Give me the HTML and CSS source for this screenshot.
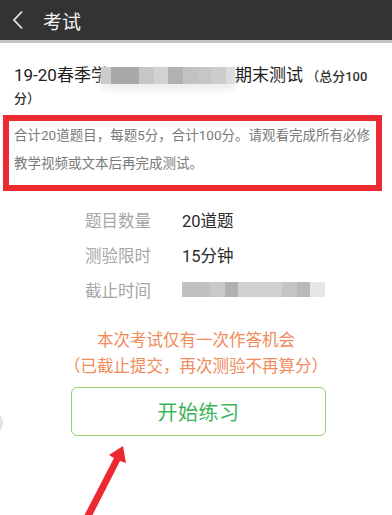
FILE: index.html
```html
<!DOCTYPE html>
<html lang="zh">
<head>
<meta charset="utf-8">
<link rel="stylesheet" href="styles.css">
</head>
<body>
<div class="page">
  <header class="topbar">
    <svg class="back" width="14" height="20" viewBox="0 0 14 20"><path d="M11 1.5 L3 10 L11 18.5" fill="none" stroke="#e6e6e6" stroke-width="1.8"/></svg>
    <span class="top-title">考试</span>
  </header>
  <div class="exam-title">19-20春季学<span class="blur-title"></span>期末测试<span class="total"> （总分100分）</span></div>
  <div class="notice">合计20道题目，每题5分，合计100分。请观看完成所有必修教学视频或文本后再完成测试。</div>
  <div class="info">
    <span class="label">题目数量</span><span class="value">20道题</span>
    <span class="label">测验限时</span><span class="value">15分钟</span>
    <span class="label">截止时间</span><span class="value"><span class="blur-date"></span></span>
  </div>
  <div class="warn">本次考试仅有一次作答机会<br>（已截止提交，再次测验不再算分）</div>
  <div class="btn">开始练习</div>
  <div class="edge"></div>
  <svg class="arrow" width="392" height="515" viewBox="0 0 392 515">
    <polygon points="123,446 126,463 120,461 92,516 84,516 114,458 109,455" fill="#ea2a30"/>
  </svg>
</div>
</body>
</html>
```
FILE: styles.css
```css
html, body {
  margin: 0;
  padding: 0;
  background: #fff;
}
body {
  font-family: "Roboto", "Noto Sans CJK SC", sans-serif;
  width: 392px;
  height: 515px;
  overflow: hidden;
}
.page {
  position: relative;
  width: 392px;
  height: 515px;
}
.topbar {
  height: 40px;
  background: #333333;
  border-bottom: 3px solid #c4c4c4;
  display: flex;
  align-items: center;
}
.back {
  margin-left: 11px;
  margin-right: 18px;
}
.top-title {
  color: #f2f2f2;
  font-size: 19px;
  font-family: "Noto Sans CJK SC", sans-serif;
}
.exam-title {
  margin-top: 22px;
  padding: 0 8px 0 14px;
  font-size: 17px;
  line-height: 20px;
  color: #222;
}
.blur-title {
  display: inline-block;
  vertical-align: -3px;
  width: 134px;
  height: 17px;
  margin-left: -7px;
  background: linear-gradient(90deg,
    #cbcbcb 0, #cbcbcb 10px,
    #a9a9a9 10px, #a9a9a9 38px,
    #c6c6c6 38px, #c6c6c6 53px,
    #d2d2d2 53px, #d2d2d2 67px,
    #b1b1b1 67px, #b1b1b1 82px,
    #c2c2c2 82px, #c2c2c2 97px,
    #c6c6c6 97px, #c6c6c6 110px,
    #cccccc 110px, #cccccc 125px,
    #dcdcdc 125px);
  box-shadow: 0 6px 6px #eeeeee;
}
.total {
  font-size: 13px;
  font-weight: 500;
  color: #333;
}
.notice {
  margin: 6px 10px 0 3px;
  border: 6px solid #ec2a32;
  padding: 0 4px 8px 5px;
  font-size: 13.5px;
  line-height: 28px;
  color: #7a7a7a;
}
.info {
  margin-top: 11px;
  padding-left: 85px;
  display: grid;
  grid-template-columns: 97px 1fr;
  grid-auto-rows: 35px;
  align-items: center;
  font-size: 16.5px;
}
.label {
  color: #a6a6a6;
}
.value {
  color: #2a2a2a;
}
.blur-date {
  display: block;
  width: 143px;
  height: 15px;
  background: linear-gradient(90deg,
    #c0c0c0 0, #c0c0c0 28px,
    #c9c9c9 28px, #c9c9c9 43px,
    #b1b1b1 43px, #b1b1b1 56px,
    #d0d0d0 56px, #d0d0d0 100px,
    #c5c5c5 100px, #c5c5c5 115px,
    #b9b9b9 115px, #b9b9b9 128px,
    #e6e6e6 128px);
}
.warn {
  margin-top: 21px;
  text-align: center;
  font-size: 16.5px;
  line-height: 26px;
  color: #f08b5c;
}
.btn {
  margin: 7px 0 0 71px;
  width: 253px;
  height: 47px;
  border: 1.5px solid #93d271;
  border-radius: 6px;
  display: flex;
  align-items: center;
  justify-content: center;
  font-size: 20px;
  color: #3cb45a;
  letter-spacing: 0.5px;
}
.edge {
  position: absolute;
  left: -10px;
  top: 410px;
  width: 13px;
  height: 26px;
  border-radius: 0 13px 13px 0;
  background: #e4e4e4;
}
.arrow {
  position: absolute;
  left: 0;
  top: 0;
  pointer-events: none;
}
```
